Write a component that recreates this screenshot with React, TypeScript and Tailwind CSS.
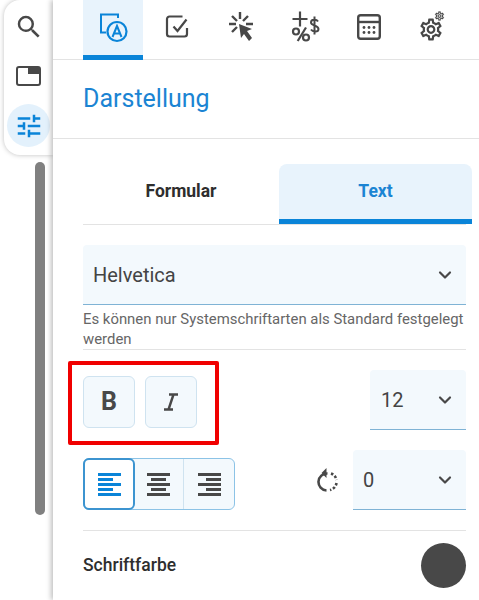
import { ChevronDown } from "lucide-react";
import { MdSearch, MdTune } from "react-icons/md";

const grey = "#484848";
const gearPath =
    "M19.43 12.98c.04-.32.07-.64.07-.98 0-.34-.03-.66-.07-.98l2.11-1.65c.19-.15.24-.42.12-.64l-2-3.46c-.09-.16-.26-.25-.44-.25-.06 0-.12.01-.17.03l-2.49 1c-.52-.4-1.08-.73-1.69-.98l-.38-2.65C14.46 2.18 14.25 2 14 2h-4c-.25 0-.46.18-.49.42l-.38 2.65c-.61.25-1.17.59-1.69.98l-2.49-1c-.06-.02-.12-.03-.18-.03-.17 0-.34.09-.43.25l-2 3.46c-.13.22-.07.49.12.64l2.11 1.65c-.04.32-.07.65-.07.98 0 .33.03.66.07.98l-2.11 1.65c-.19.15-.24.42-.12.64l2 3.46c.09.16.26.25.44.25.06 0 .12-.01.17-.03l2.49-1c.52.4 1.08.73 1.69.98l.38 2.65c.03.24.24.42.49.42h4c.25 0 .46-.18.49-.42l.38-2.65c.61-.25 1.17-.59 1.69-.98l2.49 1c.06.02.12.03.18.03.17 0 .34-.09.43-.25l2-3.46c.12-.22.07-.49-.12-.64l-2.11-1.65zm-1.98-1.71c.04.31.05.52.05.73 0 .21-.02.43-.05.73l-.14 1.13.89.7 1.08.84-.7 1.21-1.27-.51-1.04-.42-.9.68c-.43.32-.84.56-1.25.73l-1.06.43-.16 1.13-.2 1.35h-1.4l-.19-1.35-.16-1.13-1.06-.43c-.43-.18-.83-.41-1.23-.71l-.91-.7-1.06.43-1.27.51-.7-1.21 1.08-.84.89-.7-.14-1.13c-.03-.31-.05-.54-.05-.74s.02-.43.05-.73l.14-1.13-.89-.7-1.08-.84.7-1.21 1.27.51 1.04.42.9-.68c.43-.32.84-.56 1.25-.73l1.06-.43.16-1.13.2-1.35h1.39l.19 1.35.16 1.13 1.06.43c.43.18.83.41 1.23.71l.91.7 1.06-.43 1.27-.51.7 1.21-1.07.85-.89.7.14 1.13zM12 8c-2.21 0-4 1.79-4 4s1.79 4 4 4 4-1.79 4-4-1.79-4-4-4zm0 6c-1.1 0-2-.9-2-2s.9-2 2-2 2 .9 2 2-.9 2-2 2z";

function AppearanceIcon() {
    return (
        <svg width="30" height="30" viewBox="0 0 30 30" fill="none" stroke="#0a84d8" strokeWidth="2">
            <path d="M20 5V1.5H3V19.500H8" />
            <circle cx="19" cy="18.5" r="9.5" fill="#e8f3fc" strokeWidth="2.2" />
            <path d="M14.5 24l4.500-11 4.500 11M16 20.5h6" />
        </svg>
    );
}

function CheckIcon() {
    return (
        <svg width="26" height="26" viewBox="0 0 26 26" fill="none" stroke={grey} strokeWidth="2.2">
            <path d="M18.5 2.5H5.500A2.500 2.500 0 0 0 3 5v15a2.500 2.500 0 0 0 2.500 2.500h15A2.500 2.500 0 0 0 23 20v-6" />
            <path d="M9.5 12.5l4 4.500 9-11.500" />
        </svg>
    );
}

function ClickIcon() {
    return (
        <svg width="30" height="34" viewBox="0 0 30 34" fill="none" stroke={grey} strokeWidth="2.4">
            <path d="M14 2v7M3 14h7M20 14h7M6 6l5 5M22 6l-5 5M6 22l5-5" />
            <path d="M13 14l13 5-5 2 5 7-3 3-5-7-3 4z" fill={grey} stroke="none" />
        </svg>
    );
}

function PriceIcon() {
    return (
        <svg width="30" height="32" viewBox="0 0 30 32" fill="none" stroke={grey} strokeWidth="2.2">
            <path d="M2.5 8h15M10 .5v15" />
            <circle cx="6" cy="20.5" r="3" />
            <circle cx="16" cy="26.5" r="3" />
            <path d="M16 16.5L7.7 30" />
            <path d="M28 10.5c-1.500-2.500-7-2.500-7 1 0 3.500 7.500 2.500 7.500 6.500 0 3.500-6 3-7.500.5M24.500 5.500v18" strokeWidth="2" />
        </svg>
    );
}

function CalculatorIcon() {
    return (
        <svg width="24" height="26" viewBox="0 0 24 26" fill="none">
            <rect x="1.2" y="1.2" width="21.6" height="23.6" rx="2.5" stroke={grey} strokeWidth="2.4" />
            <path d="M1 8h22" stroke={grey} strokeWidth="2.4" />
            {[7, 12, 17].map((x) =>
                [13.5, 18.5].map((y) => <circle key={`${x}-${y}`} cx={x} cy={y} r="1.4" fill={grey} />)
            )}
        </svg>
    );
}

function GearIcon() {
    return (
        <svg width="28" height="34" viewBox="0 0 28 34" fill={grey} className="-ml-[3px]">
            <path d={gearPath} transform="translate(0.8 6.3) scale(1.1)" />
            <path d={gearPath} transform="translate(17.1 0.6) scale(0.45)" stroke={grey} strokeWidth="0.5" />
        </svg>
    );
}

function RotateIcon() {
    return (
        <svg width="22" height="24" viewBox="0 0 22 24" fill="none" stroke={grey} strokeWidth="2.6">
            <path d="M10.5 5.500a8.500 8.500 0 0 0-1 17" />
            <path d="M9.5 0L4.500 5l5 5z" fill={grey} stroke="none" />
            <path d="M14 5.5a8.500 8.500 0 0 1 5.500 6.500M19.500 15a8.500 8.500 0 0 1-6.500 7" strokeDasharray="2.5 1.8" />
        </svg>
    );
}

function AlignIcon({ variant, color }: { variant: "left" | "center" | "right"; color: string }) {
    const shortRow = variant === "left" ? "w-[15px]" : variant === "center" ? "mx-auto w-[15px]" : "ml-auto w-[15px]";
    return (
        <div className="flex w-[23px] flex-col gap-[2px]" style={{ color }}>
            <div className="h-[3px] w-full bg-current" />
            <div className={`h-[3px] bg-current ${shortRow}`} />
            <div className="h-[3px] w-full bg-current" />
            <div className={`h-[3px] bg-current ${shortRow}`} />
            <div className="h-[3px] w-full bg-current" />
        </div>
    );
}

function SelectField({ value, className }: { value: string; className: string }) {
    return (
        <div className={`flex h-[60px] items-center justify-between rounded-t border-b border-[#7fb3d5] bg-[#f3f9fd] ${className}`}>
            <span className="text-[20px] text-[#444]">{value}</span>
            <ChevronDown size={20} strokeWidth={2.6} color={grey} />
        </div>
    );
}

export default function App() {
    const tabIcons = [<CheckIcon key="check" />, <ClickIcon key="click" />, <PriceIcon key="price" />, <CalculatorIcon key="calc" />, <GearIcon key="gear" />];

    return (
        <div className="flex h-[600px] w-[479px] overflow-hidden bg-white font-['Roboto',sans-serif]">
            {/* Side toolbar */}
            <div className="flex w-[53px] shrink-0 flex-col pl-1">
                <div className="flex h-[155px] flex-col items-center rounded-l-2xl bg-white pt-[9px] shadow-[0_0_5px_rgba(0,0,0,0.25)]">
                    <div className="flex h-9 items-center"><MdSearch size={30} color={grey} /></div>
                    <div className="mt-[15px] flex h-8 items-center">
                        <div className="relative h-[20px] w-[25px] rounded-[3px] border-2 border-[#484848]">
                            <div className="absolute right-0 top-0 h-[6px] w-[11px] bg-[#484848]" />
                        </div>
                    </div>
                    <div className="mt-[12px] flex h-[43px] w-[43px] items-center justify-center rounded-full bg-[#e3f1fc]">
                        <MdTune size={30} color="#0a84d8" />
                    </div>
                </div>
                <div className="ml-[31px] mt-[7px] h-[353px] w-[10px] rounded-full bg-[#808080]" />
            </div>

            {/* Panel */}
            <div className="relative z-10 flex-1 bg-white shadow-[-2px_0_5px_rgba(0,0,0,0.25)]">
                <div className="flex h-[60px] items-stretch border-b border-[#e3e3e3] pl-[30px]">
                    <div className="flex h-[60px] w-[60px] items-center justify-center border-b-[5px] border-[#0a84d8] bg-[#e8f3fc]">
                        <AppearanceIcon />
                    </div>
                    {tabIcons.map((icon, i) => (
                        <div key={i} className="ml-[3px] flex w-[61px] items-center justify-center pb-[5px]">{icon}</div>
                    ))}
                </div>

                <div className="flex h-[79px] items-center border-b border-[#e3e3e3] pl-[30px] text-[25px] text-[#1b84d3]">
                    Darstellung
                </div>

                <div className="pl-[30px] pr-[13px]">
                    <div className="mt-[25px] flex h-[61px] border-b border-[#e3e3e3] text-[17.5px] font-bold">
                        <div className="flex w-[196px] items-center justify-center pb-[5px] text-[#2e2e2e]">Formular</div>
                        <div className="-mr-[6px] flex h-[60px] flex-1 items-center justify-center rounded-t-lg border-b-[5px] border-[#0a84d8] bg-[#e8f3fc] text-[#1b84d3]">
                            Text
                        </div>
                    </div>

                    <SelectField value="Helvetica" className="mt-5 pl-[10px] pr-[11px]" />
                    <p className="mt-[4px] border-b border-[#e3e3e3] text-[14.9px] leading-[20px] text-[#666]">
                        Es können nur Systemschriftarten als Standard festgelegt werden
                    </p>

                    <div className="mt-5 flex items-start justify-between">
                        <div className="mt-[6px] flex gap-[10px]">
                            <div className="flex h-[52px] w-[52px] items-center justify-center rounded-md border border-[#cfe3f0] bg-[#f3f9fd] text-[25px] font-bold text-[#484848]">
                                B
                            </div>
                            <div className="flex h-[52px] w-[52px] items-center justify-center rounded-md border border-[#cfe3f0] bg-[#f3f9fd]">
                                <svg width="16" height="18" viewBox="0 0 16 18" fill="none" stroke={grey} strokeWidth="2.4">
                                    <path d="M6 1.500h9M1 16.500h9M10.500 1.500L5.500 16.500" />
                                </svg>
                            </div>
                        </div>
                        <SelectField value="12" className="w-24 px-[11px]" />
                    </div>

                    <div className="mt-5 flex items-start justify-between">
                        <div className="mt-2 flex h-[52px] w-[152px] rounded-md border border-[#8cc3e6] bg-[#f3f9fd]">
                            <div className="-m-px flex h-[52px] w-[52px] items-center justify-center rounded-md border-2 border-[#3c94d0] bg-white">
                                <AlignIcon variant="left" color="#0a84d8" />
                            </div>
                            <div className="flex w-[50px] items-center justify-center border-r border-[#cfe3f0]">
                                <AlignIcon variant="center" color={grey} />
                            </div>
                            <div className="flex flex-1 items-center justify-center">
                                <AlignIcon variant="right" color={grey} />
                            </div>
                        </div>
                        <div className="flex items-center gap-[14px]">
                            <RotateIcon />
                            <SelectField value="0" className="w-[113px] pl-[10px] pr-[11px]" />
                        </div>
                    </div>

                    <div className="mt-5 flex h-[58px] items-center justify-between border-t border-[#e3e3e3] pt-[12px]">
                        <span className="text-[17.5px] font-medium text-[#2e2e2e]">Schriftfarbe</span>
                        <div className="h-[45px] w-[45px] rounded-full bg-[#484848]" />
                    </div>
                </div>

                {/* Highlight frame over the style buttons */}
                <div className="absolute left-[15px] top-[361px] h-[84px] w-[151px] rounded-[2px] border-4 border-[#f00000]" />
            </div>
        </div>
    );
}
